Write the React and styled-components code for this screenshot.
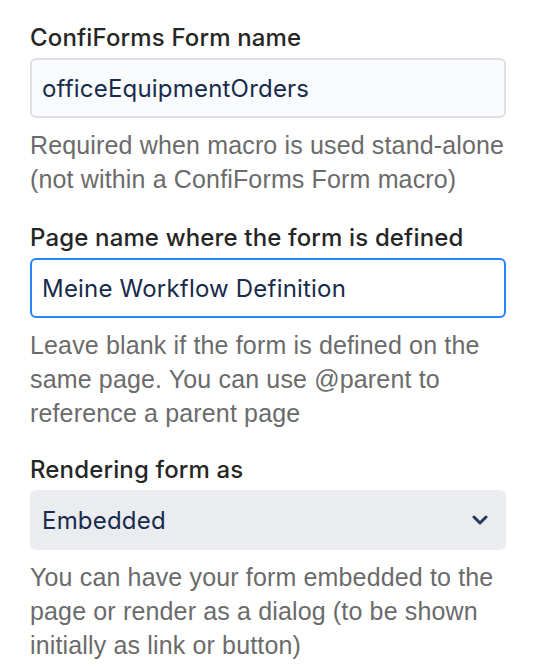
import React from "react";
import styled, { createGlobalStyle } from "styled-components";

const GlobalStyle = createGlobalStyle`
  body {
    margin: 0;
    background: #ffffff;
  }
`;

const Form = styled.div`
  width: 476px;
  padding: 23px 0 0 30px;
  display: flex;
  flex-direction: column;
`;

const Field = styled.div`
  display: flex;
  flex-direction: column;
  margin-bottom: ${(props) => props.gap || "27px"};
`;

const Label = styled.label`
  font-family: Inter, "Noto Sans", sans-serif;
  font-weight: 500;
  font-size: 24px;
  line-height: 30px;
  letter-spacing: 0.15px;
  color: #262626;
  margin-bottom: 5px;
  white-space: nowrap;
`;

const TextInput = styled.input`
  box-sizing: border-box;
  width: 100%;
  height: 60px;
  padding: 0 10px;
  border: 2px solid ${(props) => (props.focused ? "#2684ff" : "#dfe1e6")};
  border-radius: 6px;
  background: ${(props) => (props.focused ? "#ffffff" : "#fafbfc")};
  font-family: Inter, "Noto Sans", sans-serif;
  font-size: 24px;
  letter-spacing: 0.2px;
  color: #172b4d;
  outline: none;
`;

const SelectWrap = styled.div`
  position: relative;
  width: 100%;
`;

const Select = styled.select`
  box-sizing: border-box;
  width: 100%;
  height: 60px;
  padding: 0 10px;
  border: 2px solid #ebecf0;
  border-radius: 6px;
  background: #ebecf0;
  font-family: Inter, "Noto Sans", sans-serif;
  font-size: 24px;
  letter-spacing: 0.2px;
  color: #172b4d;
  appearance: none;
  outline: none;
`;

const Chevron = styled.svg`
  position: absolute;
  right: 18px;
  top: 50%;
  transform: translateY(-50%);
  pointer-events: none;
`;

const Help = styled.p`
  margin: 10px 0 0;
  font-family: "Liberation Sans", Arial, sans-serif;
  font-size: 25px;
  line-height: 34px;
  letter-spacing: 0.15px;
  color: #6b6b6b;
  white-space: nowrap;
`;

export default function App() {
  return (
    <>
      <GlobalStyle />
      <Form>
        <Field>
          <Label>ConfiForms Form name</Label>
          <TextInput readOnly value="officeEquipmentOrders" />
          <Help>
            Required when macro is used stand-alone
            <br />
            (not within a ConfiForms Form macro)
          </Help>
        </Field>
        <Field gap="25px">
          <Label>Page name where the form is defined</Label>
          <TextInput focused readOnly value="Meine Workflow Definition" />
          <Help>
            Leave blank if the form is defined on the
            <br />
            same page. You can use @parent to
            <br />
            reference a parent page
          </Help>
        </Field>
        <Field gap="0">
          <Label>Rendering form as</Label>
          <SelectWrap>
            <Select defaultValue="embedded">
              <option value="embedded">Embedded</option>
              <option value="dialog">Dialog</option>
            </Select>
            <Chevron width="16" height="10" viewBox="0 0 16 10">
              <path
                d="M2 2 L8 8 L14 2"
                fill="none"
                stroke="#253858"
                strokeWidth="3"
                strokeLinecap="round"
                strokeLinejoin="round"
              />
            </Chevron>
          </SelectWrap>
          <Help>
            You can have your form embedded to the
            <br />
            page or render as a dialog (to be shown
            <br />
            initially as link or button)
          </Help>
        </Field>
      </Form>
    </>
  );
}
